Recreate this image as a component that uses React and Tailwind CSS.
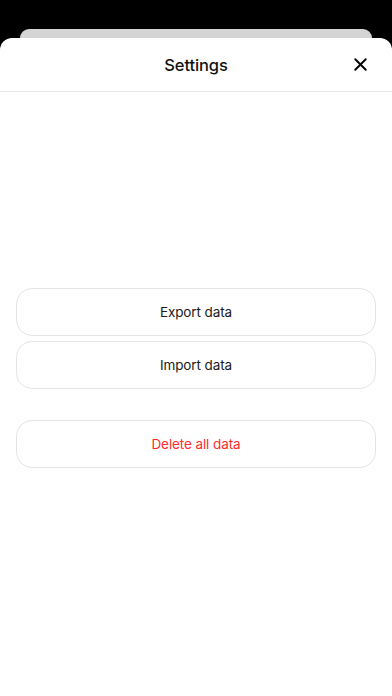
import { X } from "lucide-react";

function ActionButton({ label, danger }) {
  return (
    <button
      className={`flex h-12 w-full items-center justify-center rounded-[16px] border border-[#e4e4e4] bg-white text-[13.5px] tracking-[-0.1px] ${
        danger ? "text-[#ff2a2a]" : "text-[#1a1a1a]"
      }`}
    >
      {label}
    </button>
  );
}

export default function App() {
  return (
    <div
      className="flex h-[696px] w-full flex-col overflow-hidden bg-black"
      style={{ fontFamily: "Inter, 'Noto Sans', sans-serif" }}
    >
      {/* Stacked card behind */}
      <div className="mx-5 mt-[29px] h-[9px] shrink-0 rounded-t-[10px] bg-[#d4d4d4]" />

      {/* Sheet */}
      <div className="flex flex-1 flex-col rounded-t-[12px] bg-white">
        <div className="relative flex h-[54px] shrink-0 items-center justify-center border-b border-[#e8e8e8]">
          <h1 className="pt-[2px] text-[16.5px] font-medium tracking-[-0.1px] text-[#111]">Settings</h1>
          <button className="absolute right-[21px] top-[16px] text-black">
            <X size={21} strokeWidth={2.2} />
          </button>
        </div>

        <div className="flex flex-col px-4 pt-[196px]">
          <ActionButton label="Export data" />
          <div className="h-[5px]" />
          <ActionButton label="Import data" />
          <div className="h-[31px]" />
          <ActionButton label="Delete all data" danger />
        </div>
      </div>
    </div>
  );
}
